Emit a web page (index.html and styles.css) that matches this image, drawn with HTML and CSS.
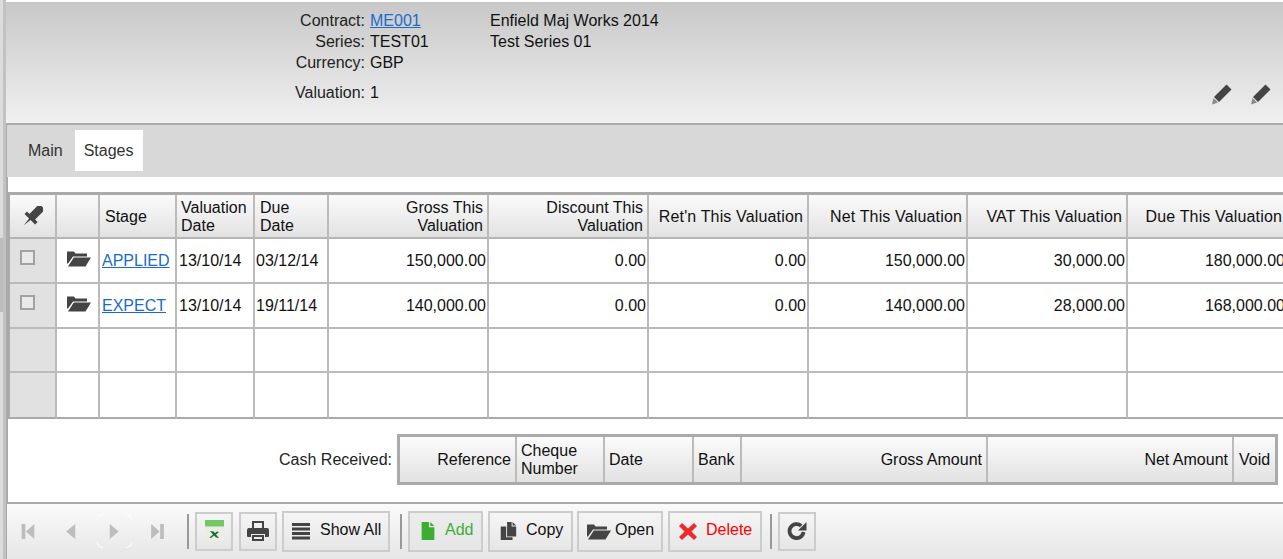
FILE: index.html
```html
<!DOCTYPE html>
<html lang="en">
<head>
<meta charset="utf-8">
<title>Valuation Stages</title>
<link rel="stylesheet" href="styles.css">
</head>
<body>
<div class="rail"></div>
<div class="main">
  <header class="hdr">
    <div class="info">
      <span class="lbl">Contract:</span><span class="val"><a href="#">ME001</a></span><span class="desc">Enfield Maj Works 2014</span>
      <span class="lbl">Series:</span><span class="val">TEST01</span><span class="desc">Test Series 01</span>
      <span class="lbl">Currency:</span><span class="val">GBP</span><span class="desc"></span>
      <span class="lbl gap">Valuation:</span><span class="val gap">1</span><span class="desc gap"></span>
    </div>
    <div class="edit">
      <svg class="pencil" viewBox="0 0 22 22"><path d="M15.500 1.500l5 5L8 19 3 14z" fill="#444"/><path d="M2.500 15l4.500 4.500-6 2z" fill="#888"/></svg>
      <svg class="pencil" viewBox="0 0 22 22"><path d="M15.500 1.500l5 5L8 19 3 14z" fill="#444"/><path d="M2.500 15l4.500 4.500-6 2z" fill="#888"/></svg>
    </div>
  </header>
  <div class="lower">
    <nav class="tabs">
      <span class="tab">Main</span>
      <span class="tab active">Stages</span>
    </nav>
    <section class="content">
      <div class="grid-wrap">
        <table class="grid">
          <colgroup>
            <col class="c47"><col class="c43"><col class="c77"><col class="c78"><col class="c74">
            <col class="c160"><col class="c160"><col class="c160"><col class="c159"><col class="c160"><col class="c160">
          </colgroup>
          <thead>
            <tr>
              <th class="ctr"><svg class="pin" viewBox="0 0 20 20"><g transform="rotate(45 10 10)"><path d="M5-3h10v3h-1v11h3.500v3.500H11L10 23 9 14.500H2.500V11H6V0H5z" fill="#444"/></g></svg></th>
              <th></th>
              <th class="pl5">Stage</th>
              <th>Valuation Date</th>
              <th class="pl5">Due<br>Date</th>
              <th class="num">Gross This<br>Valuation</th>
              <th class="num">Discount This Valuation</th>
              <th class="num ls">Ret'n This Valuation</th>
              <th class="num ls">Net This Valuation</th>
              <th class="num ls">VAT This Valuation</th>
              <th class="num ls">Due This Valuation</th>
            </tr>
          </thead>
          <tbody>
            <tr class="r1">
              <td class="sel"><span class="check"></span></td>
              <td class="ctr"><svg class="folder" viewBox="0 0 24 17"><path d="M0 1.500h7l1.500 2H20v3H6L1 13.500H0z" fill="#444"/><path d="M6.800 7.500H24L18.500 16.500H1z" fill="#444"/></svg></td>
              <td><a href="#">APPLIED</a></td><td>13/10/14</td><td class="pl1">03/12/14</td>
              <td class="num">150,000.00</td><td class="num">0.00</td><td class="num">0.00</td><td class="num">150,000.00</td><td class="num">30,000.00</td><td class="num">180,000.00</td>
            </tr>
            <tr class="r2">
              <td class="sel"><span class="check"></span></td>
              <td class="ctr"><svg class="folder" viewBox="0 0 24 17"><path d="M0 1.500h7l1.500 2H20v3H6L1 13.500H0z" fill="#444"/><path d="M6.800 7.500H24L18.500 16.500H1z" fill="#444"/></svg></td>
              <td><a href="#">EXPECT</a></td><td>13/10/14</td><td class="pl1">19/11/14</td>
              <td class="num">140,000.00</td><td class="num">0.00</td><td class="num">0.00</td><td class="num">140,000.00</td><td class="num">28,000.00</td><td class="num">168,000.00</td>
            </tr>
            <tr class="r3">
              <td class="sel"></td><td></td><td></td><td></td><td></td><td></td><td></td><td></td><td></td><td></td><td></td>
            </tr>
            <tr class="r4">
              <td class="sel"></td><td></td><td></td><td></td><td></td><td></td><td></td><td></td><td></td><td></td><td></td>
            </tr>
          </tbody>
        </table>
      </div>
      <div class="cash">
        <span class="cash-label">Cash Received:</span>
        <table class="subgrid">
          <colgroup>
            <col class="s117"><col class="s88"><col class="s89"><col class="s48"><col class="s246"><col class="s246"><col class="s41">
          </colgroup>
          <thead>
            <tr>
              <th class="num">Reference</th>
              <th>Cheque Number</th>
              <th>Date</th>
              <th>Bank</th>
              <th class="num">Gross Amount</th>
              <th class="num">Net Amount</th>
              <th class="void">Void</th>
            </tr>
          </thead>
        </table>
      </div>
    </section>
    <footer class="toolbar">
      <span class="nav"><svg class="nav-ic" viewBox="0.500 0 16 16"><path d="M2 1h3.500v14H2zM14 1v14L6 8z" fill="#bdbdbd"/></svg></span>
      <span class="nav"><svg class="nav-ic" viewBox="0.500 0 16 16"><path d="M12 1v14L3.500 8z" fill="#bdbdbd"/></svg></span>
      <span class="nav focus"><svg class="nav-ic" viewBox="0.500 0 16 16"><path d="M4 1v14l8.500-7z" fill="#bdbdbd"/></svg></span>
      <span class="nav"><svg class="nav-ic" viewBox="0 0 16 16"><path d="M2 1v14l8-7zM10.500 1H14v14h-3.500z" fill="#bdbdbd"/></svg></span>
      <span class="sep s1"></span>
      <button class="btn icon ml6"><svg class="ic xl" viewBox="0 0 19 22"><rect x="0" y="0" width="19" height="21" fill="#e8eee3"/><rect x="0" y="0" width="19" height="6" fill="#74c766"/><rect x="0" y="6" width="19" height="1" fill="#b5dca8"/><path d="M5 11l3.500.5 1.500 1.500 2-1.500 2 .5-3 2.500 3 3.500-3-.5-2-2-3 2.500-1.500-.5 3.500-3z" fill="#1d6b2c"/></svg></button>
      <button class="btn icon ml6"><svg class="ic pr" viewBox="0 0 22 22"><path d="M5 1h12v7H15V3H7v5H5z" fill="#444"/><path d="M2 8h18q2 0 2 2v6q0 1-1 1h-3v-3H4v3H1q-1 0-1-1v-6q0-2 2-2z" fill="#444"/><path d="M5 15h12v6H5zM7 17v2h8v-2z" fill="#444"/></svg></button>
      <button class="btn ml5 w108"><svg class="ic" viewBox="0 0 20 18"><path d="M0 1h18v3H0zM0 5.500h18v3H0zM0 10h18v3H0zM0 14.500h18v3H0z" fill="#444"/></svg><span class="tx">Show All</span></button>
      <span class="sep s2"></span>
      <button class="btn ml6 w75 add"><svg class="ic" viewBox="0 0 20 22"><path d="M3 1h8v6h6v14H3z" fill="#3aae2e"/><path d="M12.500 1L17 5.500h-4.500z" fill="#3aae2e"/></svg><span class="tx">Add</span></button>
      <button class="btn ml5 w85"><svg class="ic" viewBox="0 0 20 22"><path d="M9 1h5v5h5v11H9zM15 1l4 4h-4z" fill="#444"/><path d="M2 6h6v12h7v3H2z" fill="#444"/></svg><span class="tx">Copy</span></button>
      <button class="btn ml4 w86 open"><svg class="ic wide" viewBox="0 0 24 17"><path d="M0 1.500h7l1.500 2H20v3H6L1 13.500H0z" fill="#444"/><path d="M6.800 7.500H24L18.500 16.500H1z" fill="#444"/></svg><span class="tx">Open</span></button>
      <button class="btn ml5 w94 del"><svg class="ic" viewBox="0 0 20 20"><path d="M4 2l6 5.500L16 2l3 3-5.500 5.500L19 16l-3 3-6-5.500L4 19l-3-3 5.500-5.500L1 5z" fill="#ef2a2a"/></svg><span class="tx">Delete</span></button>
      <span class="sep s3"></span>
      <button class="btn icon ml6"><svg class="ic" viewBox="0 0 20 20"><path d="M16.500 11a7 7 0 1 1-2.300-6.200" fill="none" stroke="#444" stroke-width="3.800"/><path d="M19.500 1v8.500H11z" fill="#444"/></svg></button>
    </footer>
  </div>
</div>
</body>
</html>
```
FILE: styles.css
```css
* { box-sizing: border-box; }
html, body { margin: 0; padding: 0; height: 559px; overflow: hidden; background: #fff; }
body {
  display: flex;
  width: 1283px;
  font-family: "Liberation Sans", Arial, sans-serif;
  font-size: 16px;
  color: #111;
}
a { color: #1a6ccb; text-decoration: underline; }
.rail {
  flex: 0 0 6px;
  border-right: 3px solid #c2c2c2;
  background: linear-gradient(to bottom, #dcdcdc 238px, #bcbcbc 238px, #bcbcbc 312px, #dcdcdc 312px);
}
.main { flex: 1; min-width: 0; display: flex; flex-direction: column; padding-top: 2px; }
.hdr {
  height: 123px;
  flex: none;
  display: flex;
  justify-content: space-between;
  border-bottom: 2px solid #aaa;
  background: linear-gradient(to bottom, #c8c8c8, #f0f0f0);
}
.info {
  display: grid;
  grid-template-columns: 359px 125px 300px;
  grid-auto-rows: 21px;
  padding-top: 8px;
  line-height: 21px;
}
.lbl { text-align: right; color: #222; }
.val { padding-left: 5px; }
.gap { margin-top: 9px; }
.edit { display: flex; gap: 17px; align-items: flex-start; padding: 81px 11px 0 0; }
.pencil { width: 22px; height: 22px; display: block; }

.lower { flex: 1; min-height: 0; display: flex; flex-direction: column; border-left: 1px solid #aaa; }
.tabs {
  height: 52px;
  flex: none;
  display: flex;
  align-items: flex-start;
  gap: 3px;
  padding: 5px 0 0 12px;
  background: #d8d8d8;
}
.tab { height: 41px; line-height: 41px; padding: 0 9px; color: #333; }
.active { background: #fff; width: 68px; }
.content { height: 325px; flex: none; background: #fff; border-left: 1px solid #aaa; padding-top: 15px; }
.grid-wrap { overflow: hidden; }
table { border-collapse: separate; border-spacing: 0; table-layout: fixed; }
.grid {
  width: 1278px;
  border-top: 3px solid #aaa;
  border-left: 2px solid #aaa;
  box-sizing: content-box;
}
.grid th, .subgrid th {
  font-weight: normal;
  text-align: left;
  line-height: 18px;
  padding: 1px 4px 0;
  background: linear-gradient(to bottom, #fbfbfb, #e2e2e2);
  border-right: 2px solid #bbb;
}
.grid th { height: 44px; border-bottom: 2px solid #b4b4b4; }
.grid th.pl5 { padding-left: 5px; }
.grid th.ls { letter-spacing: .15px; }
.grid td {
  padding: 0 1px 0 2px;
  border-right: 2px solid #bbb;
  border-bottom: 2px solid #bbb;
  white-space: nowrap;
}
.grid td.pl1 { padding-left: 1px; }
.grid .r1 td { height: 45px; }
.grid .r1 td:not(.ctr):not(.sel) { padding-top: 1px; }
.grid .r2 td { height: 45px; }
.grid .r3 td { height: 44px; }
.grid .r4 td { height: 46px; border-bottom-color: #aaa; }
.grid .num, .subgrid .num { text-align: right; }
.grid .ctr { text-align: center; padding: 0; }
.grid .sel { background: #e1e1e1; vertical-align: top; padding: 11px 0 0 10px; }
.c47 { width: 47px; } .c43 { width: 43px; } .c77 { width: 77px; } .c78 { width: 78px; } .c74 { width: 74px; }
.c160 { width: 160px; } .c159 { width: 159px; }
.check { display: block; width: 15px; height: 15px; border: 2px solid #a2a2a2; background: #eaeaea; }
.pin { width: 20px; height: 20px; display: block; margin: 0 auto; }
.folder { width: 24px; height: 17px; display: block; margin: -4px auto 0 10px; }

.cash { display: flex; align-items: flex-start; height: 83px; padding-top: 15px; }
.cash-label { width: 384px; line-height: 51px; text-align: right; color: #222; }
.subgrid {
  width: 881px;
  margin-left: 5px;
  border: 3px solid #aaa;
}
.subgrid th { height: 45px; }
.subgrid th:last-child { border-right: 0; }
.subgrid th.void { padding-left: 5px; padding-right: 0; }
.s117 { width: 117px; } .s88 { width: 88px; } .s89 { width: 89px; } .s48 { width: 48px; }
.s246 { width: 246px; } .s41 { width: 41px; }

.toolbar {
  flex: 1;
  min-height: 0;
  display: flex;
  align-items: center;
  border-top: 2px solid #aaa;
  background: linear-gradient(to bottom, #fafafa, #e6e6e6);
  padding-bottom: 1px;
}
.nav { width: 43px; height: 36px; display: flex; align-items: center; justify-content: center; flex: none; }
.focus { background:
  radial-gradient(circle at 100% 100%, transparent 5px, rgba(255,255,255,.75) 5px, rgba(255,255,255,.75) 6px, transparent 6px) left 4px top 1px / 6px 6px no-repeat,
  radial-gradient(circle at 0 100%, transparent 5px, rgba(255,255,255,.75) 5px, rgba(255,255,255,.75) 6px, transparent 6px) right 4px top 1px / 6px 6px no-repeat,
  radial-gradient(circle at 100% 0, transparent 5px, rgba(255,255,255,.75) 5px, rgba(255,255,255,.75) 6px, transparent 6px) left 4px bottom 1px / 6px 6px no-repeat,
  radial-gradient(circle at 0 0, transparent 5px, rgba(255,255,255,.75) 5px, rgba(255,255,255,.75) 6px, transparent 6px) right 4px bottom 1px / 6px 6px no-repeat;
}
.nav-ic { width: 17px; height: 17px; display: block; }
.sep { width: 2px; height: 35px; background: #999; flex: none; }
.s1 { margin-left: 8px; }
.s2 { margin-left: 10px; }
.s3 { margin-left: 8px; }
.btn {
  height: 41px;
  flex: none;
  display: flex;
  align-items: center;
  padding: 0 0 0 8px;
  font: inherit;
  color: #111;
  border: 2px solid #ccc;
  background: linear-gradient(to bottom, #f5f5f5, #e6e6e6);
}
.icon { width: 38px; height: 39px; padding: 0; justify-content: center; }
.ml4 { margin-left: 4px; } .ml5 { margin-left: 5px; } .ml6 { margin-left: 6px; }
.w108 { width: 108px; } .w75 { width: 75px; } .w85 { width: 85px; } .w86 { width: 86px; } .w94 { width: 94px; }
.ic { width: 20px; height: 20px; display: block; flex: none; }
.ic.wide { width: 24px; height: 17px; }
.ic.xl { width: 19px; height: 22px; }
.ic.pr { width: 22px; height: 22px; }
.tx { margin-left: 8px; margin-top: -3px; }
.add .tx { color: #3aae3a; margin-left: 7px; }
.open .tx { margin-left: 4px; }
.del .tx { color: #f00; }
.add { background: linear-gradient(to bottom, #ececec, #e6e6e6); }
```
